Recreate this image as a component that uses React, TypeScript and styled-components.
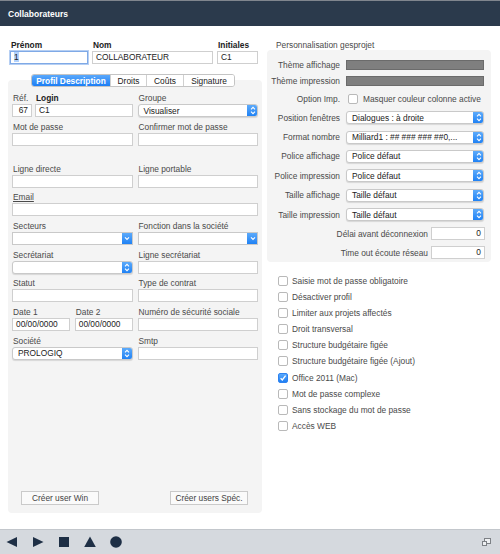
import { styled, createGlobalStyle } from 'styled-components';

const GlobalStyle = createGlobalStyle`
  html, body {
    margin: 0;
    padding: 0;
    background: #fff;
  }
  body {
    font-family: 'Liberation Sans', Arial, sans-serif;
    font-size: 8.35px;
    color: #333;
  }
  * {
    box-sizing: border-box;
  }
`;

const Window = styled.div`
  width: 500px;
  height: 554px;
  display: flex;
  flex-direction: column;
  overflow: hidden;
`;

const TitleBar = styled.div`
  flex: none;
  height: 26px;
  display: flex;
  align-items: center;
  padding-left: 8px;
  background: #2b3a4c;
  border-top: 1px solid #80868e;
  color: #fff;
  font-weight: bold;
  font-size: 8.5px;
`;

const Body = styled.div`
  flex: 1;
  display: flex;
  gap: 5px;
  padding: 14px 9px 0 8px;
`;

const LeftColumn = styled.div`
  width: 254px;
  display: flex;
  flex-direction: column;
`;

const RightColumn = styled.div`
  width: 224px;
  display: flex;
  flex-direction: column;
`;

const NameRow = styled.div`
  display: flex;
  gap: 4px;
  padding-left: 2px;
`;

const Field = styled.div<{ $w?: number; $wide?: boolean }>`
  display: flex;
  flex-direction: column;
  gap: 1px;
  min-width: 0;
  ${(p) => (p.$w ? `width: ${p.$w}px; flex: none;` : 'flex: 1;')}
  ${(p) => (p.$wide ? 'grid-column: 1 / -1;' : '')}
`;

const Label = styled.span<{ $bold?: boolean; $underline?: boolean }>`
  height: 10px;
  line-height: 10px;
  padding-left: 1px;
  white-space: nowrap;
  color: ${(p) => (p.$bold ? '#222' : '#4a4a4a')};
  font-weight: ${(p) => (p.$bold ? 'bold' : 'normal')};
  text-decoration: ${(p) => (p.$underline ? 'underline' : 'none')};
`;

const TextBox = styled.div<{ $focus?: boolean; $right?: boolean }>`
  height: 13px;
  line-height: 11px;
  padding: 0 3px;
  background: #fff;
  border: 1px solid ${(p) => (p.$focus ? '#7fa9e6' : '#cfcfcf')};
  box-shadow: ${(p) => (p.$focus ? '0 0 0 1px #b6cff3' : 'none')};
  color: #222;
  white-space: nowrap;
  overflow: hidden;
  text-align: ${(p) => (p.$right ? 'right' : 'left')};
`;

const Selected = styled.span`
  background: #b3d2fb;
`;

const TabStrip = styled.div`
  display: flex;
  justify-content: center;
  margin: 10px 0 -7px;
  position: relative;
  z-index: 1;
  padding-right: 4px;
`;

const Tabs = styled.div`
  display: flex;
  height: 13px;
  border: 1px solid #c4c4c4;
  border-radius: 3px;
  background: #fff;
  overflow: hidden;
`;

const Tab = styled.div<{ $active?: boolean; $w: number }>`
  width: ${(p) => p.$w}px;
  display: flex;
  align-items: center;
  justify-content: center;
  border-left: 1px solid #d0d0d0;
  color: ${(p) => (p.$active ? '#fff' : '#222')};
  font-weight: ${(p) => (p.$active ? 'bold' : 'normal')};
  background: ${(p) => (p.$active ? 'linear-gradient(#5aa8fb, #1c7ef5)' : '#fff')};
  &:first-child {
    border-left: none;
  }
`;

const TabPanel = styled.div`
  height: 433px;
  display: flex;
  flex-direction: column;
  padding: 13px 4px 8px;
  background: #f4f4f4;
  border-radius: 4px;
`;

const FormGrid = styled.div`
  display: grid;
  grid-template-columns: 1fr 1fr;
  column-gap: 5px;
  row-gap: 4.67px;
`;

const Spacer = styled.div`
  grid-column: 1 / -1;
  height: 8.7px;
`;

const Pair = styled.div<{ $gap: number }>`
  display: flex;
  gap: ${(p) => p.$gap}px;
  min-width: 0;
`;

const Popup = styled.div<{ $square?: boolean }>`
  height: 13px;
  display: flex;
  align-items: center;
  background: #fff;
  border: 1px solid #c9c9c9;
  border-radius: ${(p) => (p.$square ? '0' : '3px')};
  box-shadow: ${(p) => (p.$square ? 'none' : '0 1px 1px rgba(0, 0, 0, 0.12)')};
  overflow: hidden;
`;

const PopupText = styled.span`
  flex: 1;
  padding-left: 5px;
  color: #222;
  white-space: nowrap;
  overflow: hidden;
  text-overflow: ellipsis;
`;

const Stepper = styled.div<{ $square?: boolean }>`
  flex: none;
  width: 11px;
  height: 13px;
  margin: -1px -1px -1px 0;
  display: flex;
  align-items: center;
  justify-content: center;
  background: linear-gradient(#62aefb, #1a7ef4);
  border-radius: ${(p) => (p.$square ? '0' : '0 3px 3px 0')};
`;

const ButtonRow = styled.div`
  margin-top: auto;
  display: flex;
  justify-content: space-between;
  padding: 0 10px 0 9px;
`;

const PushButton = styled.div`
  width: 78px;
  height: 14px;
  display: flex;
  align-items: center;
  justify-content: center;
  background: #fafafa;
  border: 1px solid #cacaca;
  color: #444;
`;

const SectionTitle = styled.div`
  height: 10px;
  line-height: 10px;
  padding-left: 9px;
  color: #4a4a4a;
`;

const SettingsPanel = styled.div`
  display: flex;
  flex-direction: column;
  gap: 6.4px;
  padding: 10px 7px 3px 0;
  background: #f4f4f4;
  border-radius: 4px;
`;

const SettingRow = styled.div<{ $h: number; $end?: boolean }>`
  height: ${(p) => p.$h}px;
  display: flex;
  align-items: center;
  justify-content: ${(p) => (p.$end ? 'flex-end' : 'flex-start')};
  gap: ${(p) => (p.$end ? 3 : 6)}px;
`;

const SettingLabel = styled.span<{ $auto?: boolean }>`
  ${(p) => (p.$auto ? '' : 'width: 73px; flex: none;')}
  text-align: right;
  white-space: nowrap;
  color: #4a4a4a;
`;

const ThemeBar = styled.div`
  flex: 1;
  height: 10px;
  background: #7f7f7f;
  border: 1px solid #6b6b6b;
`;

const Grow = styled.div`
  flex: 1;
  min-width: 0;
`;

const NumberBox = styled(TextBox)`
  width: 54px;
  flex: none;
  margin-right: -1px;
`;

const Check = styled.span<{ $on?: boolean }>`
  flex: none;
  width: 10px;
  height: 10px;
  display: inline-flex;
  align-items: center;
  justify-content: center;
  border-radius: 2px;
  border: 1px solid ${(p) => (p.$on ? '#2f83f0' : '#b9b9b9')};
  background: ${(p) => (p.$on ? 'linear-gradient(#5aa8fb, #1f7ff3)' : '#fff')};
`;

const CheckLabel = styled.span`
  color: #4a4a4a;
  white-space: nowrap;
`;

const InlineCheck = styled.div`
  flex: 1;
  display: flex;
  align-items: center;
  gap: 5px;
  padding-left: 2px;
`;

const CheckList = styled.div`
  display: flex;
  flex-direction: column;
  padding: 11px 0 0 11px;
`;

const CheckRow = styled.div`
  height: 16.1px;
  display: flex;
  align-items: center;
  gap: 4px;
`;

const Toolbar = styled.div`
  flex: none;
  height: 25px;
  display: flex;
  align-items: center;
  padding: 0 9px 0 6px;
  background: #d5d9de;
  border-top: 1px solid #c3c7cc;
`;

const ToolIcon = styled.svg`
  flex: none;
  margin-right: 14px;
`;

const ToolSpacer = styled.div`
  flex: 1;
`;

const UpDown = () => (
  <svg width="6" height="9" viewBox="0 0 6 9">
    <path d="M1 3.4 L3 1.4 L5 3.4 M1 5.6 L3 7.6 L5 5.6" fill="none" stroke="#fff" strokeWidth="1.1" />
  </svg>
);

const Down = () => (
  <svg width="6" height="5" viewBox="0 0 6 5">
    <path d="M1 1.3 L3 3.3 L5 1.3" fill="none" stroke="#fff" strokeWidth="1.2" />
  </svg>
);

const Tick = () => (
  <svg width="8" height="8" viewBox="0 0 8 8">
    <path d="M1.6 4.2 L3.3 6 L6.6 1.6" fill="none" stroke="#fff" strokeWidth="1.3" />
  </svg>
);

type SelectProps = { value?: string; square?: boolean };

const Select = ({ value = '', square }: SelectProps) => (
  <Popup $square={square}>
    <PopupText>{value}</PopupText>
    <Stepper $square={square}>{square ? <Down /> : <UpDown />}</Stepper>
  </Popup>
);

const settings = [
  { label: 'Position fenêtres', value: 'Dialogues : à droite' },
  { label: 'Format nombre', value: 'Milliard1 : ## ### ### ##0,...' },
  { label: 'Police affichage', value: 'Police défaut' },
  { label: 'Police impression', value: 'Police défaut' },
  { label: 'Taille affichage', value: 'Taille défaut' },
  { label: 'Taille impression', value: 'Taille défaut' },
];

const options = [
  { label: 'Saisie mot de passe obligatoire' },
  { label: 'Désactiver profil' },
  { label: 'Limiter aux projets affectés' },
  { label: 'Droit transversal' },
  { label: 'Structure budgétaire figée' },
  { label: 'Structure budgétaire figée (Ajout)' },
  { label: 'Office 2011 (Mac)', on: true },
  { label: 'Mot de passe complexe' },
  { label: 'Sans stockage du mot de passe' },
  { label: 'Accès WEB' },
];

export default function App() {
  return (
    <Window>
      <GlobalStyle />
      <TitleBar>Collaborateurs</TitleBar>
      <Body>
        <LeftColumn>
          <NameRow>
            <Field $w={78}>
              <Label $bold>Prénom</Label>
              <TextBox $focus>
                <Selected>1</Selected>
              </TextBox>
            </Field>
            <Field $w={121}>
              <Label $bold>Nom</Label>
              <TextBox>COLLABORATEUR</TextBox>
            </Field>
            <Field $w={41}>
              <Label $bold>Initiales</Label>
              <TextBox>C1</TextBox>
            </Field>
          </NameRow>

          <TabStrip>
            <Tabs>
              <Tab $active $w={78}>Profil Description</Tab>
              <Tab $w={36}>Droits</Tab>
              <Tab $w={37}>Coûts</Tab>
              <Tab $w={51}>Signature</Tab>
            </Tabs>
          </TabStrip>

          <TabPanel>
            <FormGrid>
              <Pair $gap={3}>
                <Field $w={20}>
                  <Label>Réf.</Label>
                  <TextBox $right>67</TextBox>
                </Field>
                <Field>
                  <Label $bold>Login</Label>
                  <TextBox>C1</TextBox>
                </Field>
              </Pair>
              <Field>
                <Label>Groupe</Label>
                <Select value="Visualiser" />
              </Field>

              <Field>
                <Label>Mot de passe</Label>
                <TextBox />
              </Field>
              <Field>
                <Label>Confirmer mot de passe</Label>
                <TextBox />
              </Field>

              <Spacer />

              <Field>
                <Label>Ligne directe</Label>
                <TextBox />
              </Field>
              <Field>
                <Label>Ligne portable</Label>
                <TextBox />
              </Field>

              <Field $wide>
                <Label $underline>Email</Label>
                <TextBox />
              </Field>

              <Field>
                <Label>Secteurs</Label>
                <Select square />
              </Field>
              <Field>
                <Label>Fonction dans la société</Label>
                <Select square />
              </Field>

              <Field>
                <Label>Secrétariat</Label>
                <Select />
              </Field>
              <Field>
                <Label>Ligne secrétariat</Label>
                <TextBox />
              </Field>

              <Field>
                <Label>Statut</Label>
                <TextBox />
              </Field>
              <Field>
                <Label>Type de contrat</Label>
                <TextBox />
              </Field>

              <Pair $gap={5}>
                <Field>
                  <Label>Date 1</Label>
                  <TextBox>00/00/0000</TextBox>
                </Field>
                <Field>
                  <Label>Date 2</Label>
                  <TextBox>00/00/0000</TextBox>
                </Field>
              </Pair>
              <Field>
                <Label>Numéro de sécurité sociale</Label>
                <TextBox />
              </Field>

              <Field>
                <Label>Société</Label>
                <Select value="PROLOGIQ" />
              </Field>
              <Field>
                <Label>Smtp</Label>
                <TextBox />
              </Field>
            </FormGrid>

            <ButtonRow>
              <PushButton>Créer user Win</PushButton>
              <PushButton>Créer users Spéc.</PushButton>
            </ButtonRow>
          </TabPanel>
        </LeftColumn>

        <RightColumn>
          <SectionTitle>Personnalisation gesprojet</SectionTitle>
          <SettingsPanel>
            <SettingRow $h={10}>
              <SettingLabel>Thème affichage</SettingLabel>
              <ThemeBar />
            </SettingRow>
            <SettingRow $h={10}>
              <SettingLabel>Thème impression</SettingLabel>
              <ThemeBar />
            </SettingRow>
            <SettingRow $h={12}>
              <SettingLabel>Option Imp.</SettingLabel>
              <InlineCheck>
                <Check />
                <CheckLabel>Masquer couleur colonne active</CheckLabel>
              </InlineCheck>
            </SettingRow>
            {settings.map((s) => (
              <SettingRow key={s.label} $h={13}>
                <SettingLabel>{s.label}</SettingLabel>
                <Grow>
                  <Select value={s.value} />
                </Grow>
              </SettingRow>
            ))}
            <SettingRow $h={12.5} $end>
              <SettingLabel $auto>Délai avant déconnexion</SettingLabel>
              <NumberBox $right>0</NumberBox>
            </SettingRow>
            <SettingRow $h={12.5} $end>
              <SettingLabel $auto>Time out écoute réseau</SettingLabel>
              <NumberBox $right>0</NumberBox>
            </SettingRow>
          </SettingsPanel>

          <CheckList>
            {options.map((o) => (
              <CheckRow key={o.label}>
                <Check $on={o.on}>{o.on && <Tick />}</Check>
                <CheckLabel>{o.label}</CheckLabel>
              </CheckRow>
            ))}
          </CheckList>
        </RightColumn>
      </Body>

      <Toolbar>
        <ToolIcon width="12" height="12" viewBox="0 0 12 12">
          <path d="M0.5 6 L11 1 L11 11 Z" fill="#1e2f45" />
        </ToolIcon>
        <ToolIcon width="12" height="12" viewBox="0 0 12 12">
          <path d="M11.5 6 L1 1 L1 11 Z" fill="#1e2f45" />
        </ToolIcon>
        <ToolIcon width="12" height="12" viewBox="0 0 12 12">
          <rect x="1" y="1" width="10" height="10" fill="#1e2f45" />
        </ToolIcon>
        <ToolIcon width="12" height="12" viewBox="0 0 12 12">
          <path d="M6 0.5 L11.8 11 L0.2 11 Z" fill="#1e2f45" />
        </ToolIcon>
        <ToolIcon width="12" height="12" viewBox="0 0 12 12">
          <circle cx="6" cy="6" r="5.8" fill="#1e2f45" />
        </ToolIcon>
        <ToolSpacer />
        <svg width="9" height="9" viewBox="0 0 9 9">
          <rect x="2.5" y="0.5" width="6" height="5" fill="#eef0f2" stroke="#7d8186" />
          <rect x="0.5" y="3.5" width="4" height="4" fill="#eef0f2" stroke="#7d8186" />
        </svg>
      </Toolbar>
    </Window>
  );
}
